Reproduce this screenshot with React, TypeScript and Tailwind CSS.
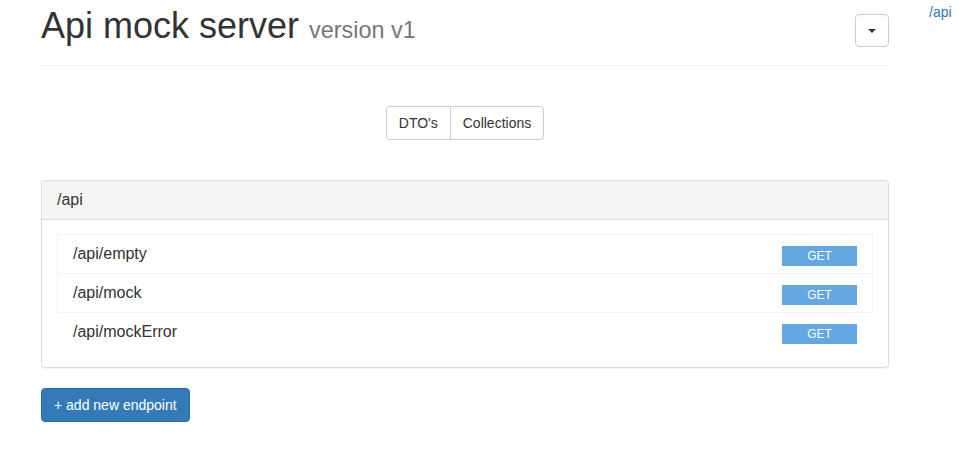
import React from "react";

const font = { fontFamily: '"Liberation Sans", Arial, Helvetica, sans-serif' };

function Row({ path, last }: { path: string; last?: boolean }) {
  return (
    <div
      className={
        "flex h-[39px] items-center justify-between " +
        (last ? "pl-[16px] pr-[16px]" : "border-x border-t border-[#f3f3f3] pl-[15px] pr-[15px]")
      }
    >
      <span className="text-[16px] leading-[18px] text-[#333]">{path}</span>
      <span className="mt-[4px] flex h-[20px] w-[75px] items-center justify-center bg-[#63a8e3] text-[12px] leading-[14px] text-white">
        GET
      </span>
    </div>
  );
}

export default function App() {
  return (
    <div className="min-h-[456px] bg-white text-[#333]" style={font}>
      <div className="flex">
        <div className="ml-[41px] w-[848px]">
          <div className="flex items-start justify-between border-b border-[#eee] pb-[9px] pt-[6px]">
            <h1 className="mb-[10px] h-[40px] text-[36px] leading-[40px] font-normal text-[#333]">
              Api mock server{" "}
              <span className="text-[23.4px] leading-none text-[#777]">version v1</span>
            </h1>
            <button className="mt-[8px] flex h-[33px] w-[34px] items-center justify-center rounded-[4px] border border-[#ccc] bg-white">
              <span className="block h-0 w-0 border-x-[4px] border-t-[4px] border-x-transparent border-t-[#333]" />
            </button>
          </div>

          <div className="mt-[40px] flex justify-center">
            <div className="flex h-[34px] text-[14px] leading-[20px] text-[#333]">
              <button className="rounded-l-[4px] border border-[#ccc] bg-white px-[12px]">
                DTO's
              </button>
              <button className="-ml-px rounded-r-[4px] border border-[#ccc] bg-white px-[12px]">
                Collections
              </button>
            </div>
          </div>

          <div className="mt-[40px] rounded-[4px] border border-[#ddd] shadow-[0_1px_1px_rgba(0,0,0,0.05)]">
            <div className="rounded-t-[3px] border-b border-[#ddd] bg-[#f5f5f5] px-[15px] py-[10px]">
              <h3 className="text-[16px] leading-[17.6px] font-normal">/api</h3>
            </div>
            <div className="p-[15px] pt-[14px]">
              <div className="flex flex-col">
                <Row path="/api/empty" />
                <Row path="/api/mock" />
                <div className="border-t border-[#f3f3f3]">
                  <Row path="/api/mockError" last />
                </div>
              </div>
            </div>
          </div>

          <button className="mt-[20px] h-[34px] rounded-[4px] border border-[#2e6da4] bg-[#337ab7] px-[12px] text-[14px] leading-[20px] text-white">
            + add new endpoint
          </button>
        </div>
        <div className="ml-[40px]">
          <a className="text-[14px] leading-[20px] text-[#337ab7]" href="#">
            /api
          </a>
        </div>
      </div>
    </div>
  );
}
